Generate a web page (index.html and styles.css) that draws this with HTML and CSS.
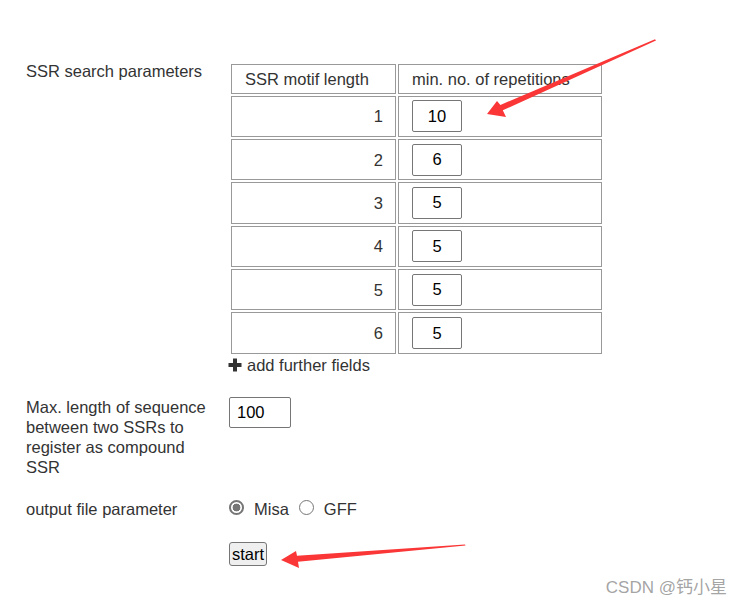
FILE: index.html
```html
<!DOCTYPE html>
<html lang="en">
<head>
  <meta charset="UTF-8" />
  <title>SSR search</title>
  <link rel="stylesheet" href="styles.css">
</head>
<body>
  <form class="ssr-form">
    <div class="row">
      <div class="label">SSR search parameters</div>
      <div class="field">
        <table class="motif-table">
          <thead>
            <tr>
              <th class="len-head">SSR motif length</th>
              <th class="rep-head">min. no. of repetitions</th>
            </tr>
          </thead>
          <tbody>
            <tr><td class="len">1</td><td><input class="rep" type="text" value="10"></td></tr>
            <tr><td class="len">2</td><td><input class="rep" type="text" value="6"></td></tr>
            <tr><td class="len">3</td><td><input class="rep" type="text" value="5"></td></tr>
            <tr><td class="len">4</td><td><input class="rep" type="text" value="5"></td></tr>
            <tr><td class="len">5</td><td><input class="rep" type="text" value="5"></td></tr>
            <tr><td class="len">6</td><td><input class="rep" type="text" value="5"></td></tr>
          </tbody>
        </table>
        <div class="add-fields">
          <svg class="plus" width="14" height="14" viewBox="0 0 14 14">
            <rect x="5" y="0.5" width="4" height="13" fill="#333"/>
            <rect x="0.5" y="5" width="13" height="4" fill="#333"/>
          </svg>
          add further fields
        </div>
      </div>
    </div>

    <div class="row row-compound">
      <div class="label">Max. length of sequence between two SSRs to register as compound SSR</div>
      <div class="field">
        <input class="gap-input" type="text" value="100">
      </div>
    </div>

    <div class="row row-output">
      <div class="label">output file parameter</div>
      <div class="field radios">
        <input class="radio" type="radio" name="format" value="misa" checked>
        <span class="radio-text">Misa</span>
        <input class="radio" type="radio" name="format" value="gff">
        <span class="radio-text">GFF</span>
      </div>
    </div>

    <div class="row row-submit">
      <div class="label"></div>
      <div class="field">
        <button class="start" type="button">start</button>
      </div>
    </div>
  </form>

  <!-- screenshot annotations -->
  <svg class="annotations" width="751" height="607" viewBox="0 0 751 607">
    <polygon fill="#fa3636" points="487,114 497,101 500.4,104.9 655,39.3 656,40.6 502.8,110.3 506,117"/>
    <polygon fill="#fa3636" points="281,560 296,551 297,555.8 465,544.4 465.5,545.6 298,561.7 299,568"/>
  </svg>
  <div class="watermark">CSDN @钙小星</div>
</body>
</html>
```

FILE: styles.css
```css
body {
  margin: 0;
  font-family: "Liberation Sans", Arial, sans-serif;
  font-size: 16.5px;
  line-height: 20px;
  color: #333;
  background: white;
}
.ssr-form {
  padding: 61px 0 0 26px;
}
.row {
  display: grid;
  grid-template-columns: 185px auto;
  column-gap: 18px;
  align-items: start;
}
.row-compound {
  margin-top: 22px;
}
.row-output {
  margin-top: 21.5px;
}
.row-submit {
  margin-top: 23.5px;
}
.motif-table {
  border-collapse: separate;
  border-spacing: 2px;
  table-layout: fixed;
  width: 375px;
  margin-top: 0.5px;
}
th, td {
  border: 1px solid #999;
  padding: 0 13px;
  font-weight: normal;
  text-align: left;
  vertical-align: middle;
}
th {
  box-sizing: border-box;
  height: 30px;
}
td {
  box-sizing: border-box;
  height: 41.4px;
}
.len-head {
  width: 165px;
}
.rep-head {
  width: 204px;
}
td.len {
  text-align: right;
  padding-right: 12px;
}
.rep {
  display: block;
  box-sizing: border-box;
  width: 50px;
  height: 32px;
  padding: 0;
  border: 1px solid #767676;
  border-radius: 2px;
  font: inherit;
  color: #000;
  text-align: center;
}
.add-fields {
  display: flex;
  align-items: center;
  height: 20px;
  margin-top: -0.5px;
}
.plus {
  margin-right: 5px;
  margin-left: -1px;
  margin-top: -1px;
}
.gap-input {
  box-sizing: border-box;
  width: 62px;
  height: 31px;
  padding: 0 7px;
  border: 1px solid #767676;
  border-radius: 2px;
  font: inherit;
  color: #000;
  margin: 0;
}
.radios {
  display: flex;
  align-items: center;
  height: 20px;
}
.radio {
  appearance: none;
  box-sizing: border-box;
  width: 15px;
  height: 15px;
  margin: 0 10px 2px 0;
  border: 1px solid #767676;
  border-radius: 50%;
  background: white;
}
.radio:checked {
  border: 2px solid #767676;
  background: radial-gradient(circle, #767676 0 3.6px, white 4.2px);
}
.radio-text {
  margin-right: 10px;
}
.start {
  box-sizing: border-box;
  height: 24px;
  padding: 0 2px;
  border: 1px solid #767676;
  border-radius: 3px;
  background: #efefef;
  font: inherit;
  line-height: 20px;
  color: #000;
}
.annotations {
  position: absolute;
  top: 0;
  left: 0;
  pointer-events: none;
}
.watermark {
  position: absolute;
  right: 24px;
  top: 577px;
  font-family: "Liberation Sans", "Noto Sans CJK SC", sans-serif;
  font-size: 17px;
  line-height: 22px;
  color: rgba(140, 140, 140, 0.8);
}
```
